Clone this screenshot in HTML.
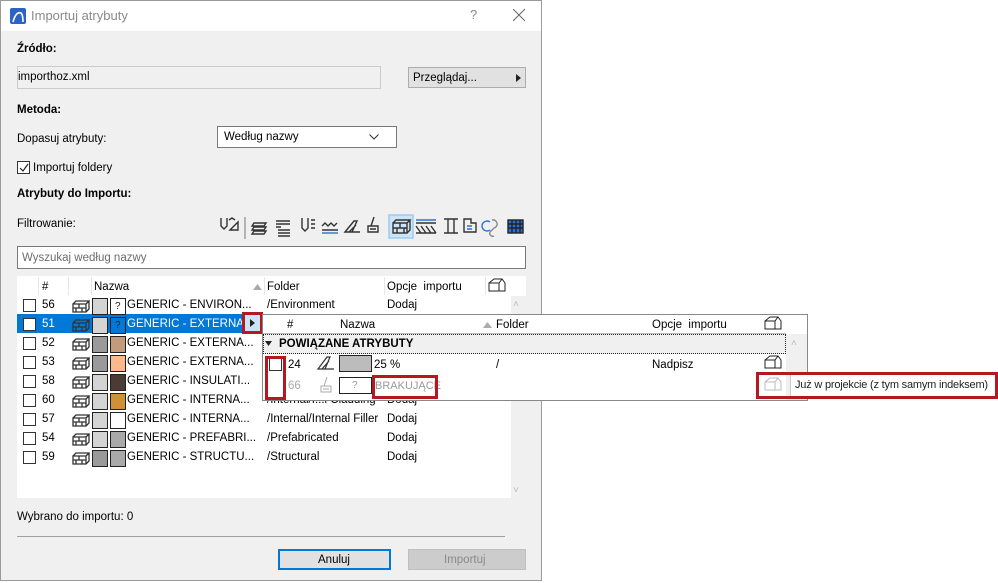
<!DOCTYPE html>
<html><head><meta charset="utf-8">
<style>
*{box-sizing:border-box;margin:0;padding:0}
body{width:998px;height:583px;background:#fff;position:relative;overflow:hidden;font-family:"Liberation Sans",sans-serif;font-size:11.5px;color:#000}
.a{position:absolute}
.t{position:absolute;white-space:nowrap;line-height:14px}
.b{font-weight:bold}
.cb{position:absolute;width:13px;height:13px;border:1px solid #333;background:#fff}
.sw{position:absolute;width:16px;height:16px;border:1px solid #222}
.dots{background:#d4d4d4}
.dots2{background:#9a9a9a}
.red{position:absolute;border:3px solid #b3191e}
</style></head><body>
<div class="a" style="left:0;top:0;width:542px;height:581px;border:1px solid #9a9a9a;background:#f0f0f0"></div>
<div class="a" style="top:1px;left:1px;width:540px;height:30px;background:#fff"></div>
<svg class="a" style="left:10px;top:8px" width="16" height="16"><rect width="16" height="16" rx="2" fill="#2b63c6"/><path d="M3 14 Q6 3 11 5 Q13 7 13 14" stroke="#fff" stroke-width="1.6" fill="none"/></svg>
<div class="t" style="left:31px;top:9px;color:#8a8a8a;font-size:13px">Importuj atrybuty</div>
<div class="t" style="left:470px;top:8px;color:#888;font-size:13px">?</div>
<svg class="a" style="left:513px;top:9px" width="12" height="12"><path d="M0 0L12 12M12 0L0 12" stroke="#666" stroke-width="1"/></svg>

<div class="t b" style="left:17px;top:42px">Źródło:</div>
<div class="a" style="left:17px;top:66px;width:364px;height:23px;border:1px solid #ccc;background:#f0f0f0"></div>
<div class="t" style="left:18px;top:70px">importhoz.xml</div>
<div class="a" style="left:408px;top:67px;width:118px;height:21px;border:1px solid #adadad;background:#e1e1e1"></div>
<div class="t" style="left:413px;top:71px">Przeglądaj...</div>
<svg class="a" style="left:516px;top:74px" width="5" height="8"><path d="M0 0L5 4L0 8Z" fill="#222"/></svg>
<div class="t b" style="left:17px;top:103px">Metoda:</div>
<div class="t" style="left:17px;top:132px">Dopasuj atrybuty:</div>
<div class="a" style="left:217px;top:126px;width:180px;height:22px;border:1px solid #7a7a7a;background:#fff"></div>
<div class="t" style="left:224px;top:130px">Według nazwy</div>
<svg class="a" style="left:369px;top:134px" width="10" height="6"><path d="M0.5 0.5L5 5L9.5 0.5" stroke="#333" fill="none"/></svg>
<div class="cb" style="left:17px;top:161px"></div>
<svg class="a" style="left:19px;top:163px" width="10" height="10"><path d="M1 5L4 8L9 1" stroke="#222" fill="none" stroke-width="1.2"/></svg>
<div class="t" style="left:33px;top:161px">Importuj foldery</div>
<div class="t b" style="left:17px;top:187px">Atrybuty do Importu:</div>
<div class="t" style="left:17px;top:217px">Filtrowanie:</div>
<svg class="a" style="left:218px;top:214px" width="312" height="26" fill="none" stroke="#333" stroke-width="1.4">
<path d="M3 4v8l3 3 3-3V4M11 6l3-2 3 2M12 16l8-8v8z"/>
<path d="M27 3v22" stroke="#999"/>
<path d="M36 9h12l-2 3h-12zM36 13h12l-2 3h-12zM36 17h12l-2 3h-12z"/>
<path d="M58 7h14M58 10h14M58 13h5M60 16h12M60 19h12M60 22h12"/>
<path d="M84 4v10l3 3 3-3V4M93 6h4M93 10h4M93 14h4"/>
<path d="M104 12l3-3 3 3 3-3 3 3 3-3M104 16h16" /><path d="M104 19h16" stroke="#2b6fd6"/>
<path d="M127 18l9-11h3l-5 11zM131 18l7-7M127 18h15"/>
<path d="M150 18v-6h10v6zM153 12l3-9M152 15h6"/>
<rect x="171" y="1" width="24" height="23" fill="#cce4f7" stroke="#99c9ef"/>
<path d="M175 9h14v10h-14zM175 9l3-3h14l-3 3M192 6v10l-3 3M175 14h14M182 9v5M179 14v5M186 14v5"/>
<path d="M198 6h20" stroke="#2b6fd6"/><path d="M198 9h20M198 12l5 7M203 12l5 7M208 12l5 7M213 12l5 7M198 19h20"/>
<path d="M226 5h14M226 19h14M230 5v14M236 5v14"/>
<path d="M246 5h7v4h5v9h-12z"/><path d="M249 12h5M249 15h5" stroke="#2b6fd6"/>
<path d="M272 8a5 5 0 1 0 0 8" stroke="#2b6fd6"/><path d="M274 6a4 4 0 1 1 2 8l-4 4a3 3 0 0 0 4 4" stroke="#888"/>
<rect x="290" y="6" width="15" height="13" fill="#2b6fd6" stroke="#222"/><path d="M290 10h15M290 14h15M294 6v13M298 6v13M302 6v13" stroke="#222"/>
</svg>
<div class="a" style="left:17px;top:246px;width:509px;height:23px;border:1px solid #7a7a7a;background:#fff"></div>
<div class="t" style="left:22px;top:251px;color:#6d6d6d">Wyszukaj według nazwy</div>

<div class="a" style="left:17px;top:276px;width:509px;height:222px;background:#fff"></div>
<div class="a" style="left:511px;top:296px;width:15px;height:202px;background:#f0f0f0"></div>
<div class="t" style="left:513px;top:298px;color:#bbb;font-size:10px">˄</div>
<div class="t" style="left:513px;top:484px;color:#bbb;font-size:10px">˅</div>
<div class="a" style="left:38px;top:277px;width:1px;height:18px;background:#e6e6e6"></div>
<div class="a" style="left:68px;top:277px;width:1px;height:18px;background:#e6e6e6"></div>
<div class="a" style="left:91px;top:277px;width:1px;height:18px;background:#e6e6e6"></div>
<div class="a" style="left:264px;top:277px;width:1px;height:18px;background:#e6e6e6"></div>
<div class="a" style="left:384px;top:277px;width:1px;height:18px;background:#e6e6e6"></div>
<div class="a" style="left:485px;top:277px;width:1px;height:18px;background:#e6e6e6"></div>
<div class="t" style="left:42px;top:280px">#</div>
<div class="t" style="left:94px;top:280px">Nazwa</div>
<svg class="a" style="left:253px;top:284px" width="9" height="6"><path d="M0 6L4.5 0L9 6Z" fill="#aaa"/></svg>
<div class="t" style="left:267px;top:280px">Folder</div>
<div class="t" style="left:387px;top:280px">Opcje&nbsp; importu</div>
<svg class="a" style="left:488px;top:278px" width="18" height="14" fill="none" stroke="#222"><path d="M1 13V5l5-4h8l3 4v8zM1 5h10l3-4M11 5v8"/></svg>

<div class="a" style="left:17px;top:314px;width:226px;height:19px;background:#0078d7"></div>
<div id="rows"></div>

<div class="a" style="left:243px;top:313px;width:19px;height:20px;background:#cce4f7"></div>
<svg class="a" style="left:250px;top:319px" width="5" height="8"><path d="M0 0L5 4L0 8Z" fill="#222"/></svg>
<div class="red" style="left:242px;top:312px;width:21px;height:22px"></div>

<div class="a" style="left:262px;top:314px;width:546px;height:87px;border:1px solid #888;background:#fff"></div>
<div class="a" style="left:786px;top:334px;width:21px;height:66px;background:#f0f0f0"></div>
<div class="t" style="left:791px;top:337px;color:#bbb;font-size:10px">˄</div>
<div class="a" style="left:263px;top:315px;width:523px;height:19px;border-bottom:1px solid #bbb"></div>
<div class="t" style="left:287px;top:318px">#</div>
<div class="t" style="left:340px;top:318px">Nazwa</div>
<svg class="a" style="left:483px;top:322px" width="9" height="6"><path d="M0 6L4.5 0L9 6Z" fill="#aaa"/></svg>
<div class="t" style="left:496px;top:318px">Folder</div>
<div class="t" style="left:652px;top:318px">Opcje&nbsp; importu</div>
<svg class="a" style="left:764px;top:316px" width="18" height="14" fill="none" stroke="#222"><path d="M1 13V5l5-4h8l3 4v8zM1 5h10l3-4M11 5v8"/></svg>
<div class="a" style="left:263px;top:334px;width:523px;height:20px;background:#f0f0f0;border:1px dotted #222"></div>
<svg class="a" style="left:265px;top:341px" width="7" height="5"><path d="M0 0L7 0L3.5 5Z" fill="#222"/></svg>
<div class="t b" style="left:279px;top:337px">POWIĄZANE ATRYBUTY</div>
<div class="cb" style="left:269px;top:358px"></div>
<div class="t" style="left:288px;top:358px">24</div>
<svg class="a" style="left:317px;top:356px" width="18" height="14" fill="none" stroke="#333" stroke-width="1.2"><path d="M1 13l9-12h3l-5 12zM5 13l7-8M1 13h16"/></svg>
<div class="a" style="left:339px;top:355px;width:33px;height:17px;border:1px solid #222;background:#bcbcbc"></div>
<div class="t" style="left:374px;top:358px">25 %</div>
<div class="t" style="left:496px;top:358px">/</div>
<div class="t" style="left:652px;top:358px">Nadpisz</div>
<svg class="a" style="left:764px;top:355px" width="18" height="14" fill="none" stroke="#222"><path d="M1 13V5l5-4h8l3 4v8zM1 5h10l3-4M11 5v8"/></svg>
<div class="t" style="left:288px;top:379px;color:#aaa">66</div>
<svg class="a" style="left:318px;top:376px" width="16" height="17" fill="none" stroke="#aaa"><path d="M3 16v-6h10v6zM6 10l3-9M5 13h6"/></svg>
<div class="a" style="left:339px;top:377px;width:33px;height:17px;border:1px solid #222"></div>
<div class="t" style="left:352px;top:379px;color:#999;font-size:10px">?</div>
<div class="t" style="left:375px;top:379px;color:#999;font-size:11px">BRAKUJĄCE</div>
<div class="red" style="left:265px;top:356px;width:21px;height:44px"></div>
<div class="red" style="left:372px;top:375px;width:66px;height:24px"></div>

<div class="a" style="left:790px;top:373px;width:206px;height:25px;background:#fff;border:1px solid #ccc"></div>
<svg class="a" style="left:764px;top:377px" width="18" height="14" fill="none" stroke="#bbb"><path d="M1 13V5l5-4h8l3 4v8zM1 5h10l3-4M11 5v8"/></svg>
<div class="t" style="left:795px;top:378px;color:#222;font-size:11px;letter-spacing:-0.2px">Już w projekcie (z tym samym indeksem)</div>
<div class="red" style="left:756px;top:372px;width:242px;height:27px"></div>

<div class="t" style="left:17px;top:510px">Wybrano do importu: 0</div>
<div class="a" style="left:17px;top:536px;width:488px;height:1px;background:#a0a0a0"></div>
<div class="a" style="left:278px;top:549px;width:113px;height:21px;border:2px solid #0078d7;background:#e1e1e1"></div>
<div class="t" style="left:318px;top:553px">Anuluj</div>
<div class="a" style="left:408px;top:549px;width:118px;height:21px;border:1px solid #bfbfbf;background:#cccccc"></div>
<div class="t" style="left:444px;top:553px;color:#8a8a8a">Importuj</div>

<script>
var d=[["56","GENERIC - ENVIRON...","/Environment","q",0],["51","GENERIC - EXTERNA...","","q",1],["52","GENERIC - EXTERNA...","","#c29a7c",2],["53","GENERIC - EXTERNA...","","#fcb98c",2],["58","GENERIC - INSULATI...","","#4a3b35",0],["60","GENERIC - INTERNA...","/Internal/I...l Cladding","#d09038",0],["57","GENERIC - INTERNA...","/Internal/Internal Filler","#fff",0],["54","GENERIC - PREFABRI...","/Prefabricated","#a9a9a9",0],["59","GENERIC - STRUCTU...","/Structural","#a9a9a9",2]];
var h="";
d.forEach(function(r,i){var y=297+i*19;var sel=r[4]==1;var c=sel?"#fff":"#000";
h+='<div class="cb" style="left:23px;top:'+(y+2)+'px"></div>';
h+='<div class="t" style="left:42px;top:'+(y+1)+'px;color:'+c+'">'+r[0]+'</div>';
h+='<svg class="a" style="left:72px;top:'+(y+2)+'px" width="18" height="14" fill="none" stroke="#333" stroke-width="1.3"><path d="M1 5h13v8H1zM1 5l3-3h13l-3 3M17 2v8l-3 3M1 9h13M7 5v4M4 9v4M10 9v4"/></svg>';
h+='<div class="a '+(r[4]==2?'dots2':'dots')+'" style="left:92px;top:'+(y+1)+'px;width:16px;height:17px;border:1px solid #222"></div>';
if(r[3]=="q")h+='<div class="sw" style="left:110px;top:'+(y+1)+'px;height:17px;background:'+(sel?'#0078d7':'#fff')+'"></div><div class="t" style="left:115px;top:'+(y+3)+'px;font-size:10px;color:#222">?</div>';
else h+='<div class="sw" style="left:110px;top:'+(y+1)+'px;height:17px;background:'+r[3]+'"></div>';
h+='<div class="t" style="left:127px;top:'+(y+1)+'px;color:'+c+'">'+r[1]+'</div>';
if(r[2]){h+='<div class="t" style="left:267px;top:'+(y+1)+'px">'+r[2]+'</div>';}
if(i!=1)h+='<div class="t" style="left:387px;top:'+(y+1)+'px">Dodaj</div>';
});
document.getElementById("rows").innerHTML=h;
</script>
</body></html>
